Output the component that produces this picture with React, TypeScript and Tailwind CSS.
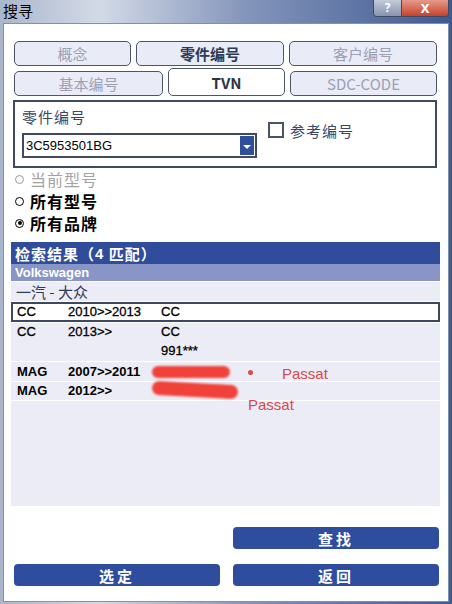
import { useState } from "react";

const cjk = "font-['Microsoft_YaHei','Noto_Sans_CJK_SC',sans-serif]";
const latin = "font-['Liberation_Sans','Noto_Sans_CJK_SC',sans-serif]";

function Tab({
  label,
  width,
  active,
  selected,
  onClick,
}: {
  label: string;
  width: string;
  active?: boolean;
  selected?: boolean;
  onClick?: () => void;
}) {
  return (
    <button
      onClick={onClick}
      className={`${width} flex items-center justify-center rounded-[5px] border border-[#4b5468] text-[15px] leading-none ${
        selected
          ? "h-[28px] bg-white text-[#2c3444] font-bold"
          : "h-[25px] bg-[#e9ebf6] " + (active ? "text-[#2f3a55] font-bold" : "text-[#9aa1b4]")
      }`}
    >
      {label}
    </button>
  );
}

function Radio({ label, checked, disabled }: { label: string; checked?: boolean; disabled?: boolean }) {
  return (
    <div className={`flex items-center h-[22px] gap-[6px] leading-none ${disabled ? "text-[#a3a3a3]" : "text-black font-bold"}`}>
      <span
        className={`w-[9px] h-[9px] rounded-full border-[1.5px] flex items-center justify-center ${
          disabled ? "border-[#9a9a9a]" : "border-black"
        }`}
      >
        {checked && <span className="w-[4px] h-[4px] rounded-full bg-black" />}
      </span>
      <span className="text-[16px] tracking-[1px]">{label}</span>
    </div>
  );
}

function Row({ a, b, c, extra, selected, bold }: { a: string; b: string; c?: string; extra?: string; selected?: boolean; bold?: boolean }) {
  return (
    <div
      className={`${latin} text-[13px] text-black ${bold ? "font-bold" : "font-normal [-webkit-text-stroke:0.3px_black]"} ${
        selected ? "bg-white border-2 border-[#3d4860] h-[20px]" : "bg-[#ebecf6] px-[2px]"
      } flex flex-col justify-center`}
    >
      <div className="flex h-[18px] items-center">
        <span className="w-[55px] pl-[4px]">{a}</span>
        <span className="w-[93px]">{b}</span>
        <span>{c}</span>
      </div>
      {extra && (
        <div className="flex h-[20px] items-center">
          <span className="ml-[148px]">{extra}</span>
        </div>
      )}
    </div>
  );
}

export default function App() {
  const [tab, setTab] = useState("TVN");

  return (
    <div className="w-[452px] h-[604px] bg-[linear-gradient(90deg,#aab6cc_0%,#d3dae7_22%,#8394ba_55%,#3f5a92_100%)] overflow-hidden">
      {/* title bar */}
      <div className="h-[23px] relative">
        <span className={`${cjk} absolute left-[3px] top-[2px] text-[15px] leading-[18px] text-black`}>搜寻</span>
        <div className="absolute right-[3px] top-0 flex h-[17px] rounded-b-[4px] overflow-hidden border border-t-0 border-[#3e4a63]">
          <div className="w-[28px] bg-[linear-gradient(180deg,#c3cbd9,#8694ae)] flex items-center justify-center text-white font-bold text-[12px] leading-none border-r border-[#3e4a63]">
            ?
          </div>
          <div className="w-[46px] bg-[linear-gradient(180deg,#e59a8a,#c8412c)] flex items-center justify-center text-white font-bold text-[13px] leading-none">
            X
          </div>
        </div>
      </div>

      {/* client area */}
      <div className={`${cjk} ml-[3px] w-[446px] h-[579px] bg-white border border-[#8391a8] pt-[17px] pl-[10px]`}>
        <div className="flex gap-[5px]">
          <Tab label="概念" width="w-[117px]" />
          <Tab label="零件编号" width="w-[148px]" active />
          <Tab label="客户编号" width="w-[148px]" />
        </div>
        <div className="flex items-end gap-[5px] mt-[2px]">
          <Tab label="基本编号" width="w-[149px]" />
          <Tab label="TVN" width="w-[117px]" selected={tab === "TVN"} onClick={() => setTab("TVN")} />
          <Tab label="SDC-CODE" width="w-[147px]" />
        </div>

        {/* part number box */}
        <div className="mt-[4px] -ml-[1px] w-[424px] h-[68px] border-2 border-[#3f4a62] flex">
          <div className="pl-[7px] pt-[5px]">
            <div className="text-[15px] leading-[20px] text-[#3a4764] tracking-[1px] h-[20px]">零件编号</div>
            <div className="mt-[6px] w-[235px] h-[25px] border-2 border-[#3f4a62] flex items-center">
              <span className={`${latin} flex-1 pl-[2px] text-[13px] text-black`}>3C5953501BG</span>
              <span className="w-[14px] h-[19px] mr-[1px] bg-[#2f4f9c] flex items-center justify-center">
                <span className="w-0 h-0 border-l-[4px] border-r-[4px] border-t-[4px] border-l-transparent border-r-transparent border-t-white mt-[3px]" />
              </span>
            </div>
          </div>
          <div className="ml-[11px] mt-[19px] flex items-center gap-[6px] h-[18px] leading-none">
            <span className="w-[16px] h-[16px] border-2 border-[#4a5468] bg-white" />
            <span className="text-[15px] text-[#3a4764] tracking-[1px]">参考编号</span>
          </div>
        </div>

        {/* radios */}
        <div className="ml-[1px] flex flex-col">
          <Radio label="当前型号" disabled />
          <Radio label="所有型号" />
          <Radio label="所有品牌" checked />
        </div>

        {/* results */}
        <div className="relative mt-[8px] -ml-[3px] w-[429px] flex flex-col gap-[1px]">
          <div className="h-[22px] bg-[#2f4d9b] text-white text-[15px] leading-none font-bold flex items-center pl-[4px] tracking-[1px]">
            检索结果（<span className={latin}>4</span>&nbsp;匹配）
          </div>
          <div className={`${latin} -mt-[1px] h-[17px] bg-[#8a95c7] text-white text-[13px] leading-none font-bold flex items-center pl-[4px]`}>
            Volkswagen
          </div>
          <div className="h-[19px] bg-[#ebecf6] text-[15px] leading-none text-[#2f3a55] flex items-center pl-[5px]">一汽 - 大众</div>
          <Row a="CC" b="2010>>2013" c="CC" selected />
          <Row a="CC" b="2013>>" c="CC" extra="991***" />
          <div className="h-[19px] bg-[#ebecf6] flex">
            <Row a="MAG" b="2007>>2011" bold />
          </div>
          <div className="h-[18px] bg-[#ebecf6] flex">
            <Row a="MAG" b="2012>>" bold />
          </div>
          <div className="h-[105px] bg-[#ebecf6]" />

          {/* red annotations */}
          <div className="absolute left-[141px] top-[124px] w-[78px] h-[12px] rounded-full bg-[#f0423a] blur-[1px]" />
          <div className="absolute left-[141px] top-[141px] w-[86px] h-[14px] rounded-full bg-[#f0423a] blur-[1px] rotate-[3deg]" />
          <div className="absolute left-[237px] top-[128px] w-[5px] h-[5px] rounded-full bg-[#e04a48]" />
          <span className={`${latin} absolute left-[271px] top-[121px] text-[15px] text-[#d24c4c]`}>Passat</span>
          <span className={`${latin} absolute left-[237px] top-[152px] text-[15px] text-[#d24c4c]`}>Passat</span>
        </div>

        {/* buttons */}
        <div className="mt-[21px] w-[425px] flex flex-col gap-[15px]">
          <div className="flex justify-end">
            <button className="w-[206px] h-[22px] rounded-[4px] bg-[#2e4d9e] text-white font-bold text-[15px] leading-none tracking-[3px]">
              查找
            </button>
          </div>
          <div className="flex justify-between">
            <button className="w-[206px] h-[22px] rounded-[4px] bg-[#2e4d9e] text-white font-bold text-[15px] leading-none tracking-[3px]">
              选定
            </button>
            <button className="w-[206px] h-[22px] rounded-[4px] bg-[#2e4d9e] text-white font-bold text-[15px] leading-none tracking-[3px]">
              返回
            </button>
          </div>
        </div>
      </div>
    </div>
  );
}
